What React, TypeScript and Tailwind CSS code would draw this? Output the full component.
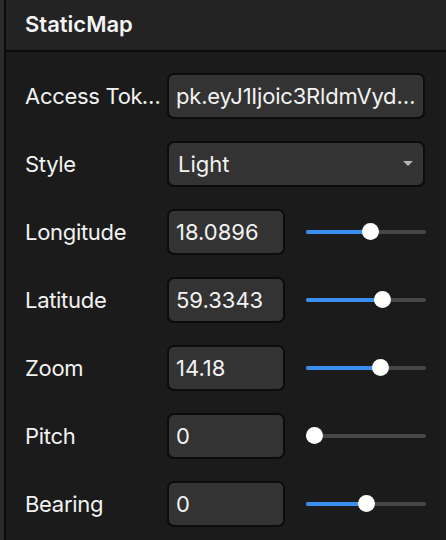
import React from 'react';

type SliderRow = { label: string; value: string; pct: number };

const sliderRows: SliderRow[] = [
  { label: 'Longitude', value: '18.0896', pct: 0.548 },
  { label: 'Latitude', value: '59.3343', pct: 0.663 },
  { label: 'Zoom', value: '14.18', pct: 0.644 },
  { label: 'Pitch', value: '0', pct: 0 },
  { label: 'Bearing', value: '0', pct: 0.5 },
];

const Label = ({ children }: { children: React.ReactNode }) => (
  <div className="w-[142px] shrink-0 truncate pr-[3px] text-[22px] tracking-[-0.3px] text-[#f2f2f2]">{children}</div>
);

const Slider = ({ pct }: { pct: number }) => (
  <div className="relative ml-[21px] h-[18px] w-[120px] shrink-0">
    {/* Track */}
    <div className="absolute left-0 right-0 top-[7px] h-[4px] rounded-full bg-[#474747]" />
    <div
      className="absolute left-0 top-[7px] h-[4px] rounded-full bg-[#3b8ff0]"
      style={{ width: `${8 + pct * 104}px` }}
    />
    {/* Thumb */}
    <div
      className="absolute top-0 h-[17px] w-[17px] rounded-full bg-white"
      style={{ left: `${pct * 104 - 0.5}px` }}
    />
  </div>
);

const Field = ({ children, className = '' }: { children: React.ReactNode; className?: string }) => (
  <div
    className={`flex h-[46px] items-center rounded-[7px] border-2 border-[#0c0c0c] bg-[#333333] pl-[7px] pr-[4px] text-[22px] text-[#f2f2f2] ${className}`}
  >
    {children}
  </div>
);

export default function App() {
  return (
    <div
      className="flex h-[540px] w-[446px] bg-[#2b2b2b]"
      style={{ fontFamily: 'Inter, "Noto Sans", sans-serif' }}
    >
      <div className="ml-[4px] flex flex-1 flex-col border-l-2 border-[#0b0b0b] bg-[#1b1b1b]">
        {/* Header */}
        <div className="flex h-[52px] shrink-0 items-center border-b-2 border-[#0b0b0b] bg-[#232323] pb-[1px] pl-[19px]">
          <span className="text-[22px] font-semibold text-[#f4f4f4]">StaticMap</span>
        </div>

        {/* Properties */}
        <div className="flex flex-col gap-[22px] pl-[19px] pr-[20px] pt-[21px]">
          <div className="flex items-center">
            <Label>Access Token</Label>
            <Field className="w-[258px] min-w-0">
              <span className="truncate tracking-[-0.2px]">pk.eyJ1Ijoic3RldmVydG9ybGFuZCIsImEiOiJjbGV4</span>
            </Field>
          </div>

          <div className="flex items-center">
            <Label>Style</Label>
            <Field className="w-[258px] justify-between pl-[9px]">
              <span>Light</span>
              <svg width="10" height="6" viewBox="0 0 10 6" className="mr-[6px]">
                <path d="M0 0 L10 0 L5 5 Z" fill="#b4b4b4" />
              </svg>
            </Field>
          </div>

          {sliderRows.map((row) => (
            <div key={row.label} className="flex items-center">
              <Label>{row.label}</Label>
              <Field className="w-[118px] shrink-0">{row.value}</Field>
              <Slider pct={row.pct} />
            </div>
          ))}
        </div>
      </div>
    </div>
  );
}
